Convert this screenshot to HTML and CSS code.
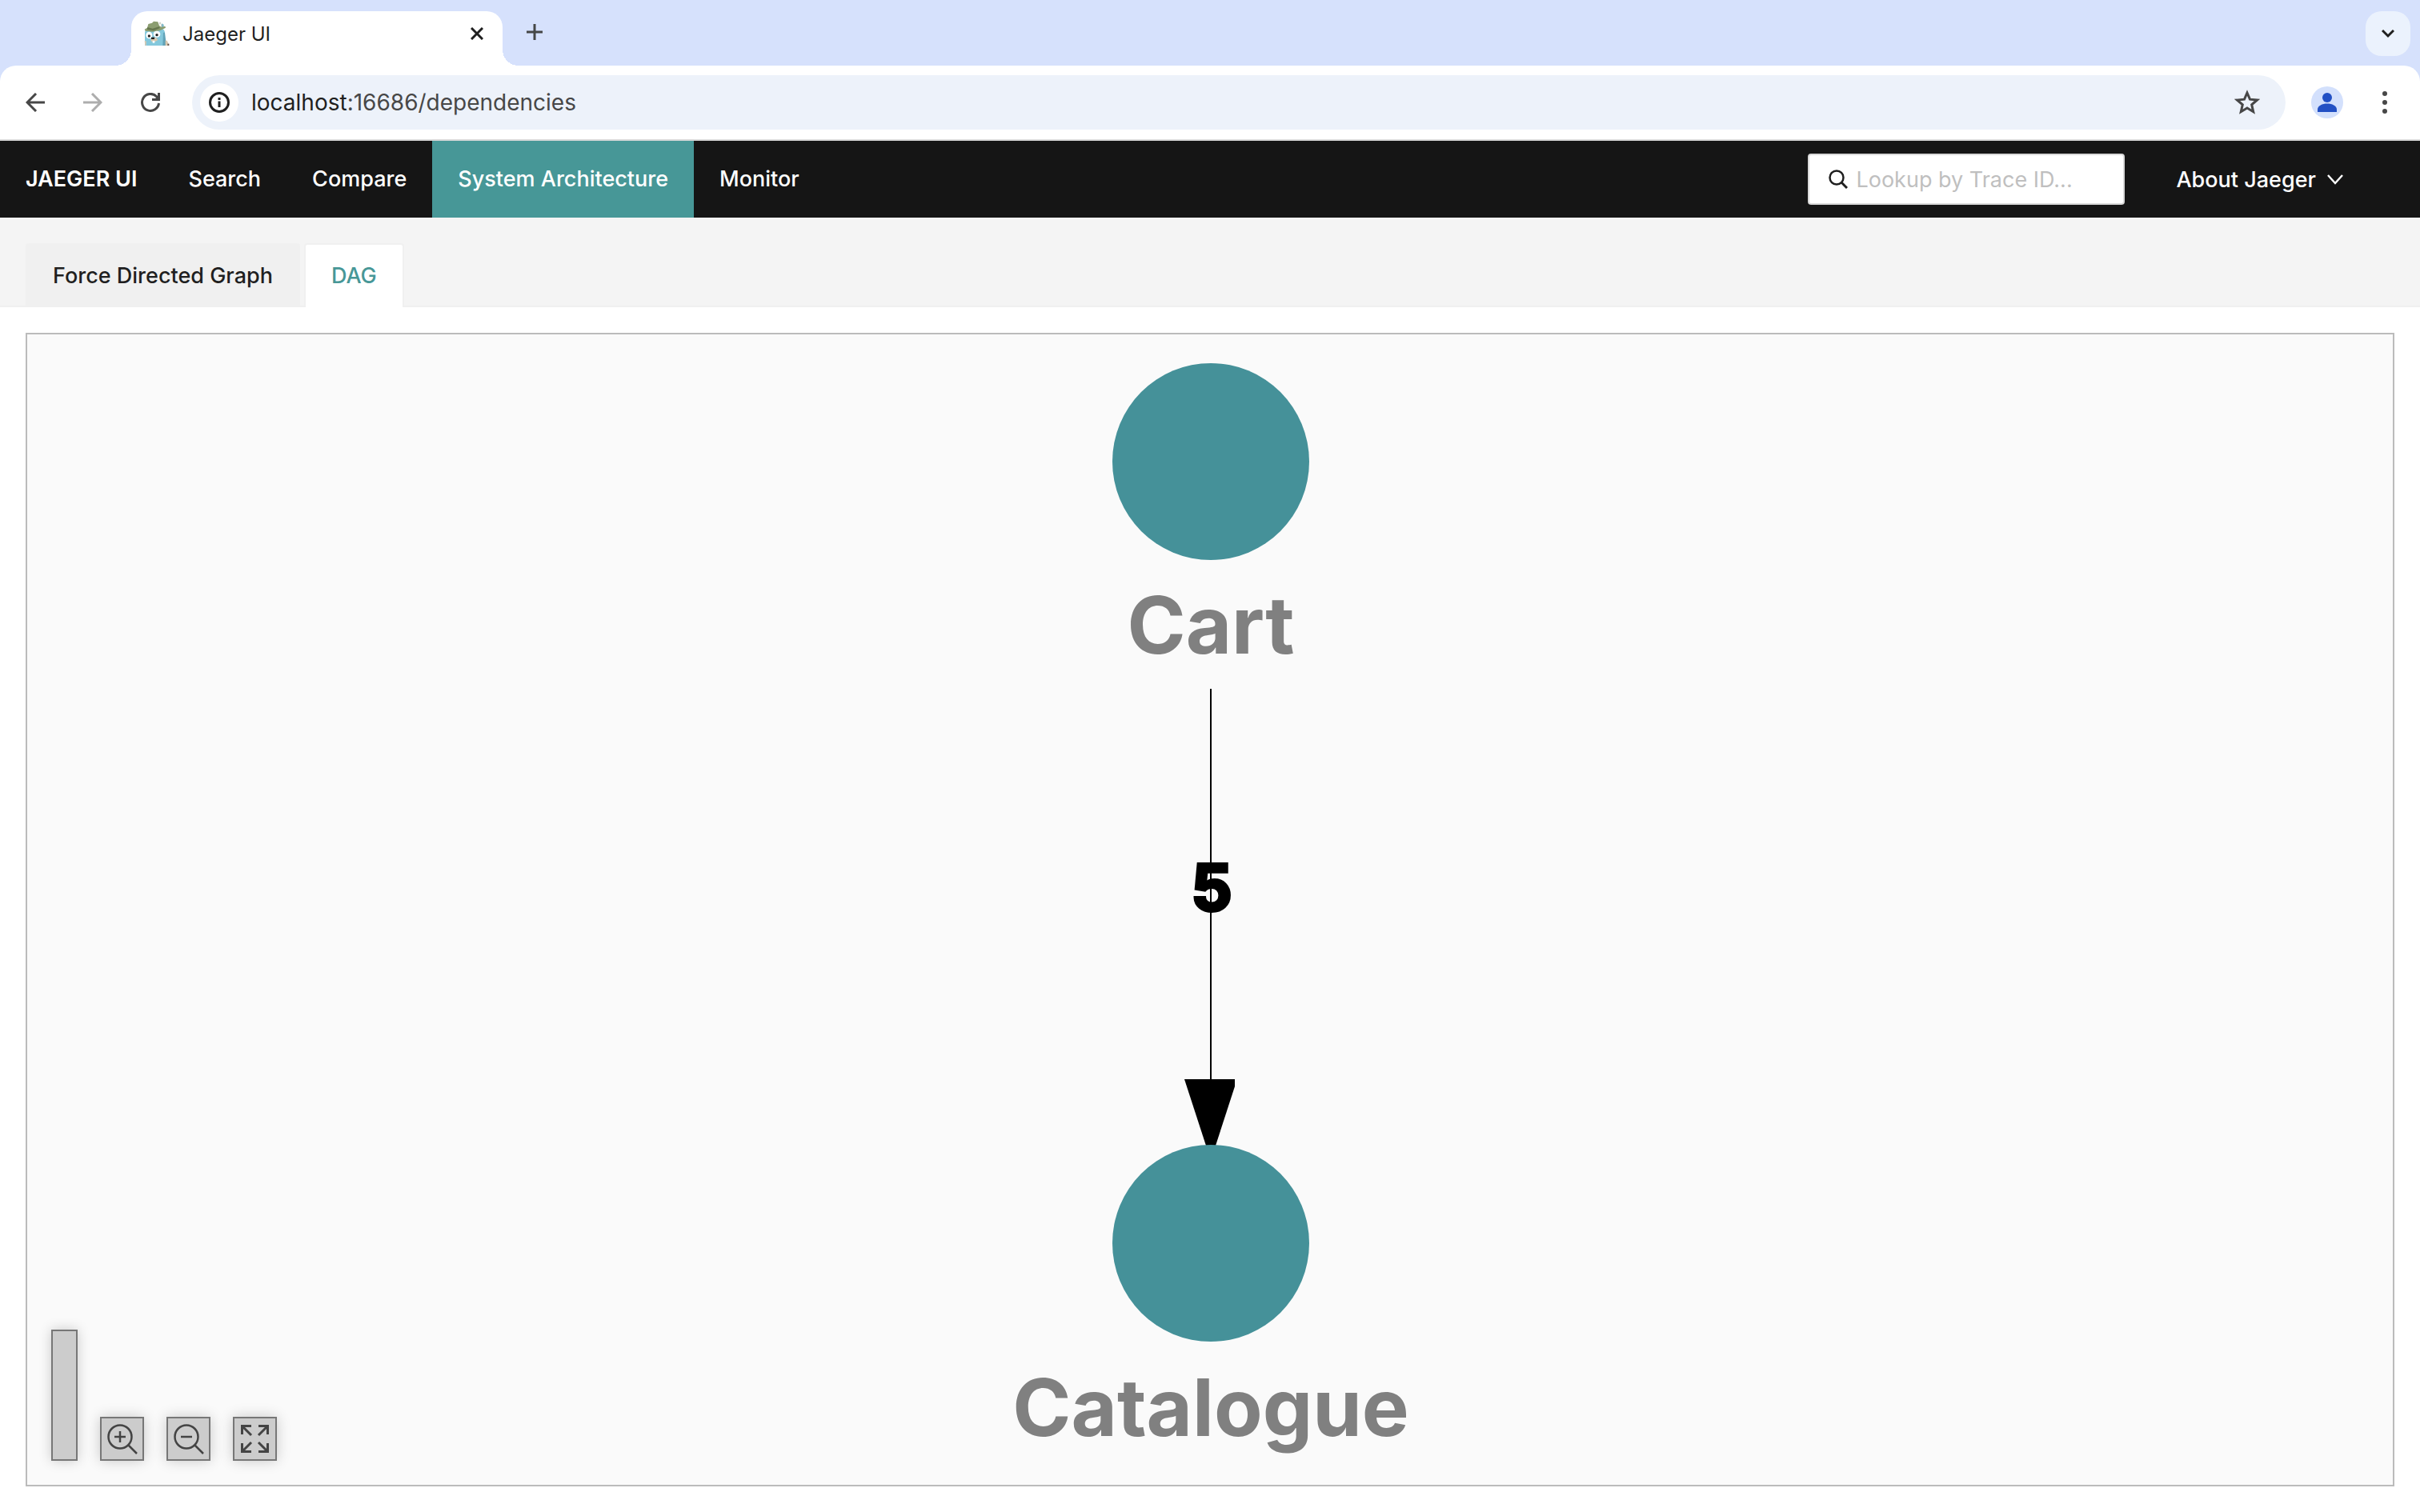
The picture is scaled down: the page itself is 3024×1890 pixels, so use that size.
FILE: index.html
```html
<!DOCTYPE html>
<html lang="en">
<head>
<meta charset="utf-8">
<title>Jaeger UI</title>
<link rel="stylesheet" href="styles.css">
</head>
<body>
<header class="browser">
  <div class="tab-strip">
    <div class="browser-tab">
      <svg class="favicon" viewBox="0 0 96 96" aria-hidden="true">
        <path d="M3 93V44c0-8 6-12 14-14l44-4c12 4 17 10 17 20v47z" fill="#84c8dc"/>
        <path d="M72 44h6l4 34v15H70z" fill="#62a3b8"/>
        <path d="M2 76h6v17H4zM80 74h6l5 10v9H80z" fill="#d8c8b0"/>
        <path d="M88 86h6v7h-6z" fill="#6a5a50"/>
        <path d="M57 5h6v8h-6zM64 12h4v12h-6z" fill="#cfd3c8"/>
        <path d="M66 10l8 4v10h-8z" fill="#7fb8c8"/>
        <path d="M12 26l4-14 14-4 6-6 16 2 5 14 8 6 14-4 2 6-20 10-30 5-26-3-3-6z" fill="#8b9d70"/>
        <path d="M12 24l20 5 24-7 4 5-24 10-24-4z" fill="#66764e"/>
        <ellipse cx="19" cy="54" rx="12" ry="13" fill="#fff"/>
        <ellipse cx="48" cy="50" rx="13" ry="12" fill="#fff"/>
        <circle cx="19" cy="57" r="5" fill="#222"/><circle cx="48" cy="53" r="5" fill="#222"/>
        <path d="M24 68l8-6 14 2 6 8-10 6H28z" fill="#d8c8b0"/>
        <path d="M27 62h12v7H27z" fill="#222"/>
        <path d="M32 75h8v8h-8z" fill="#fff"/>
      </svg>
      <span class="browser-tab-title">Jaeger UI</span>
      <button class="icon-button" aria-label="Close tab"><svg class="icon-16" viewBox="0 0 16 16"><path d="M1 1l14 14M15 1L1 15" stroke="#1f1f1f" stroke-width="3"/></svg></button>
    </div>
    <button class="icon-button new-tab" aria-label="New tab"><svg class="icon-20" viewBox="0 0 20 20"><path d="M10 0v20M0 10h20" stroke="#454746" stroke-width="3"/></svg></button>
    <button class="icon-button tab-search" aria-label="Search tabs"><svg class="icon-16" viewBox="0 0 16 16"><path d="M1 4l7 7 7-7" fill="none" stroke="#1f1f1f" stroke-width="3"/></svg></button>
  </div>
  <div class="toolbar">
    <div class="history">
      <button class="icon-button" aria-label="Back"><svg class="icon-24" viewBox="0 0 24 24"><path d="M24 12H2M13 1L2 12l11 11" fill="none" stroke="#474747" stroke-width="3"/></svg></button>
      <button class="icon-button" aria-label="Forward"><svg class="icon-24" viewBox="0 0 24 24"><path d="M0 12h22M11 1l11 11-11 11" fill="none" stroke="#adadad" stroke-width="3"/></svg></button>
      <button class="icon-button" aria-label="Reload"><svg class="icon-24" viewBox="0 0 24 24"><path d="M22.500 13A10.500 10.500 0 1 1 19.500 4.500L22 7" fill="none" stroke="#474747" stroke-width="3"/><path d="M24 0v10H14V7h4l3-3V0z" fill="#474747"/></svg></button>
    </div>
    <div class="omnibox">
      <button class="icon-button site-info" aria-label="Site information"><svg class="icon-28" viewBox="0 0 28 28"><circle cx="14" cy="14" r="11.500" fill="none" stroke="#1f1f1f" stroke-width="3"/><path d="M12.500 12.500h3V20h-3zM12.500 8h3v3h-3z" fill="#1f1f1f"/></svg></button>
      <div class="url"><span class="url-host">localhost</span>:16686/dependencies</div>
      <button class="icon-button" aria-label="Bookmark"><svg class="icon-32" viewBox="0 0 32 32"><path d="M16 4l3.500 8.200 9 .8-6.800 5.900 2 8.800L16 23l-7.700 4.700 2-8.800L3.500 13l9-.8z" fill="none" stroke="#474747" stroke-width="3"/></svg></button>
    </div>
    <button class="icon-button profile" aria-label="Profile"><svg class="icon-40" viewBox="0 0 40 40"><circle cx="20" cy="20" r="20" fill="#d3e0fc"/><circle cx="20" cy="14" r="6" fill="#2250c4"/><path d="M8 32v-3c0-5 6-7.500 12-7.500S32 24 32 29v3z" fill="#2250c4"/></svg></button>
    <button class="icon-button" aria-label="Browser menu"><svg class="icon-28" viewBox="0 0 28 28"><g fill="#474747"><circle cx="14" cy="3" r="3"/><circle cx="14" cy="14" r="3"/><circle cx="14" cy="25" r="3"/></g></svg></button>
  </div>
</header>
<nav class="navbar">
  <a class="nav-link brand" href="#">JAEGER UI</a>
  <a class="nav-link" href="#">Search</a>
  <a class="nav-link" href="#">Compare</a>
  <a class="nav-link active" href="#">System Architecture</a>
  <a class="nav-link" href="#">Monitor</a>
  <label class="lookup">
    <svg class="icon-24" viewBox="0 0 24 24" aria-hidden="true"><circle cx="10" cy="10" r="8.500" fill="none" stroke="#1f1f1f" stroke-width="2.500"/><path d="M16 16l7 7" stroke="#1f1f1f" stroke-width="3"/></svg>
    <input class="lookup-input" type="text" placeholder="Lookup by Trace ID..." aria-label="Lookup by Trace ID">
  </label>
  <button class="about">About Jaeger
    <svg class="icon-20" viewBox="0 0 20 20" aria-hidden="true"><path d="M1 5l9 10 9-10" fill="none" stroke="#fff" stroke-width="2.500"/></svg>
  </button>
</nav>
<div class="graph-tabs" role="tablist">
  <button class="graph-tab" role="tab">Force Directed Graph</button>
  <button class="graph-tab selected" role="tab" aria-selected="true">DAG</button>
</div>
<main class="content">
  <section class="graph">
    <svg class="dag" viewBox="0 0 2956 1438">
      <circle class="node" cx="1479" cy="159" r="123"/>
      <text class="node-label" x="1479" y="399">Cart</text>
      <path d="M1478 443h2v488h-2z"/>
      <path d="M1446 931h63v9l-24 74h-12z"/>
      <text class="edge-label" x="1480" y="720">5</text>
      <circle class="node" cx="1479" cy="1136" r="123"/>
      <text class="node-label" x="1479" y="1377">Catalogue</text>
    </svg>
    <div class="controls">
      <div class="minimap"></div>
      <button class="control" aria-label="Zoom in"><svg class="icon-40" viewBox="0 0 40 40"><g fill="none" stroke="#444" stroke-width="2.500"><circle cx="17" cy="17" r="14.500"/><path d="M27 27l11 11M17 10v14M10 17h14"/></g></svg></button>
      <button class="control" aria-label="Zoom out"><svg class="icon-40" viewBox="0 0 40 40"><g fill="none" stroke="#444" stroke-width="2.500"><circle cx="17" cy="17" r="14.500"/><path d="M27 27l11 11M10 17h14"/></g></svg></button>
      <button class="control" aria-label="Fit to view"><svg class="icon-40" viewBox="0 0 40 40"><path d="M3.500 14V3.500H15M4 4l11 11M35.500 14V3.500H24M35 4L24 15M3.500 25v10.500H15M4 35l11-11M35.500 25v10.500H24M35 35L24 24" fill="none" stroke="#444" stroke-width="3"/></svg></button>
    </div>
  </section>
</main>
</body>
</html>
```
FILE: styles.css
```css
* { box-sizing: border-box; }
body {
  margin: 0;
  min-height: 100vh;
  display: flex;
  flex-direction: column;
  background: #fff;
  color: #1f1f1f;
  font-family: Inter, sans-serif;
  font-size: 27px;
}
button, input { font: inherit; color: inherit; }
svg { display: block; flex: none; }
.icon-16 { width: 16px; height: 16px; }
.icon-20 { width: 20px; height: 20px; }
.icon-24 { width: 24px; height: 24px; }
.icon-28 { width: 28px; height: 28px; }
.icon-32 { width: 32px; height: 32px; }
.icon-40 { width: 40px; height: 40px; }
.icon-button {
  display: flex;
  align-items: center;
  justify-content: center;
  flex: none;
  padding: 0;
  border: 0;
  background: none;
}

/* Browser window */
.browser { background: #d6e1fc; }
.tab-strip {
  display: flex;
  align-items: center;
  padding: 14px 12px 0 164px;
}
.browser-tab {
  position: relative;
  display: flex;
  align-items: center;
  gap: 16px;
  width: 464px;
  height: 68px;
  padding: 0 24px 12px 16px;
  border-radius: 20px 20px 0 0;
  background: #fff;
}
.browser-tab::before,
.browser-tab::after {
  content: "";
  position: absolute;
  bottom: 0;
  width: 20px;
  height: 20px;
}
.browser-tab::before {
  right: 100%;
  background: radial-gradient(circle at 0 0, transparent 20px, #fff 20px);
}
.browser-tab::after {
  left: 100%;
  background: radial-gradient(circle at 100% 0, transparent 20px, #fff 20px);
}
.favicon { width: 32px; height: 32px; }
.browser-tab-title { flex: 1; font-size: 24px; }
.new-tab { margin: 0 0 16px 30px; }
.tab-search {
  width: 56px;
  height: 56px;
  margin: 0 0 12px auto;
  border-radius: 20px;
  background: #ebf2fd;
}
.toolbar {
  display: flex;
  align-items: center;
  height: 94px;
  padding: 0 30px 0 32px;
  border-bottom: 2px solid #dadada;
  border-radius: 20px 20px 0 0;
  background: #fff;
}
.history { display: flex; gap: 48px; }
.omnibox {
  display: flex;
  align-items: center;
  flex: 1;
  height: 68px;
  margin: 0 32px 0 40px;
  padding: 0 32px 0 10px;
  border-radius: 34px;
  background: #edf2fa;
}
.site-info {
  width: 48px;
  height: 48px;
  border-radius: 50%;
  background: #fff;
}
.url { flex: 1; padding-left: 16px; color: #474747; font-size: 28px; }
.url-host { color: #1f1f1f; }
.profile { margin-right: 38px; }

/* Application */
.navbar {
  display: flex;
  align-items: center;
  height: 96px;
  padding-right: 96px;
  background: #151515;
  color: #fff;
  font-weight: 500;
}
.nav-link {
  padding: 0 32px;
  line-height: 96px;
  color: #fff;
  text-decoration: none;
}
.brand { font-weight: 600; }
.active { background: #479797; }
.lookup {
  display: flex;
  align-items: center;
  gap: 10px;
  width: 396px;
  height: 64px;
  margin-left: auto;
  padding: 0 24px;
  border: 2px solid #d9d9d9;
  border-radius: 4px;
  background: #fff;
  font-weight: 400;
}
.lookup-input {
  flex: 1;
  min-width: 0;
  padding: 0;
  border: 0;
  outline: 0;
  background: none;
  color: #1f1f1f;
}
.lookup-input::placeholder { color: #bfbfbf; opacity: 1; }
.about {
  display: flex;
  align-items: center;
  gap: 14px;
  margin-left: 64px;
  padding: 0;
  border: 0;
  background: none;
}
.graph-tabs {
  display: flex;
  gap: 5px;
  height: 112px;
  padding: 32px 32px 0;
  background: #f4f4f4;
  box-shadow: inset 0 -2px #f0f0f0;
}
.graph-tab {
  padding: 0 32px 2px;
  border: 2px solid #f0f0f0;
  border-bottom: 0;
  border-radius: 4px 4px 0 0;
  background: #f0f0f0;
  font-weight: 500;
}
.selected { background: #fff; color: #479797; }
.content {
  display: flex;
  flex: 1;
  padding: 32px;
}
.graph {
  position: relative;
  display: flex;
  flex: 1;
  border: 2px solid #bbb;
  background: #fafafa;
}
.dag { flex: 1; width: 100%; min-width: 0; }
.node { fill: #459199; }
.node-label {
  fill: #808080;
  font-size: 99px;
  font-weight: 700;
  text-anchor: middle;
}
.edge-label {
  stroke: #000;
  stroke-width: 4px;
  font-size: 80px;
  font-weight: 700;
  text-anchor: middle;
}
.controls {
  position: absolute;
  left: 30px;
  bottom: 30px;
  display: flex;
  align-items: flex-end;
  gap: 28px;
}
.minimap,
.control {
  border: 2px solid #777;
  background: #ccc;
  box-shadow: 0 0 16px rgba(0, 0, 0, 0.2);
}
.minimap { width: 33px; height: 164px; }
.control {
  display: flex;
  align-items: center;
  justify-content: center;
  width: 55px;
  height: 55px;
  padding: 0;
}
```
